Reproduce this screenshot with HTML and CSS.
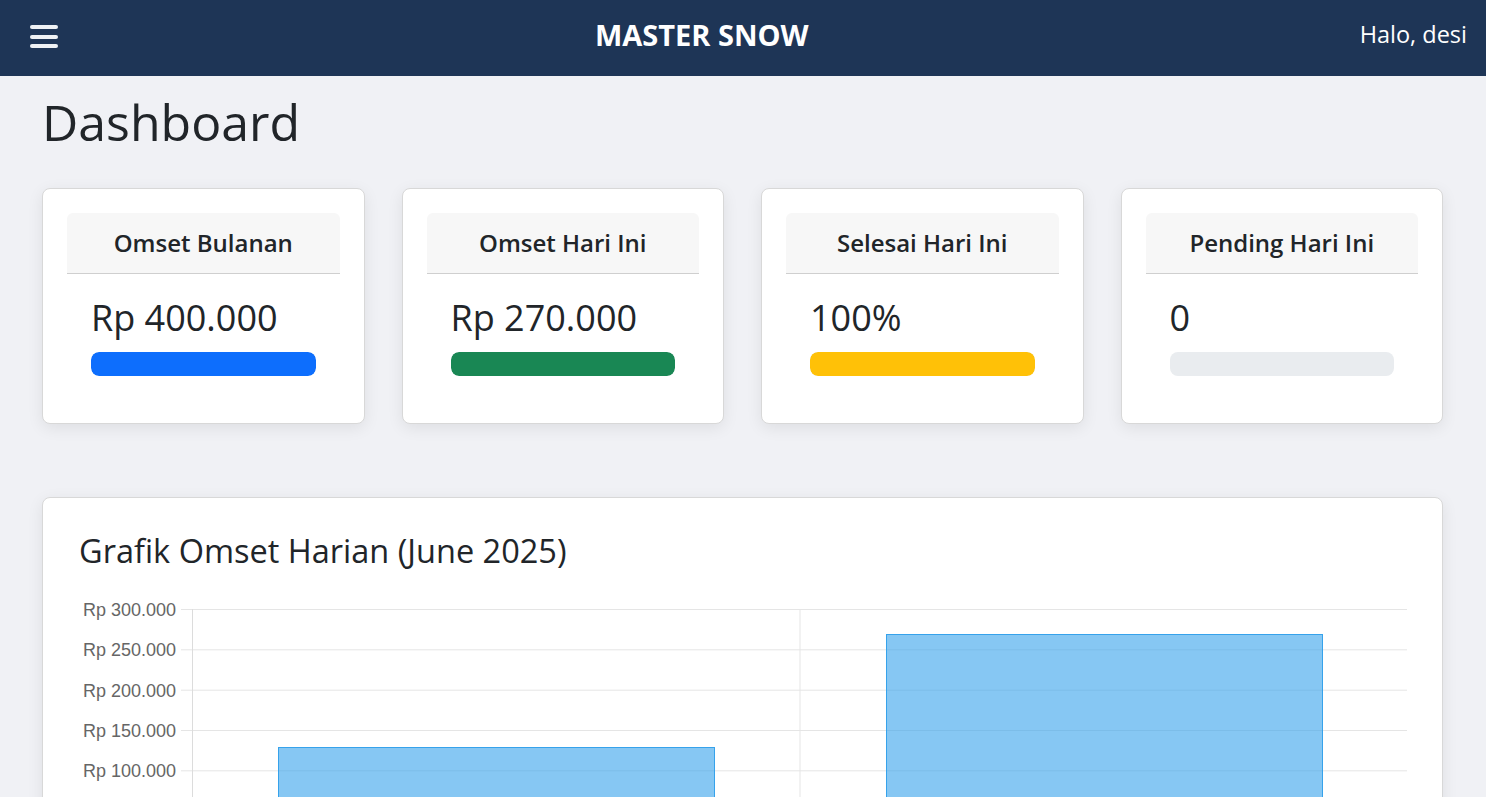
FILE: index.html
```html
<!DOCTYPE html>
<html lang="id">
<head>
<meta charset="utf-8">
<title>Dashboard - Master Snow</title>
<link rel="stylesheet" href="styles.css">
</head>
<body>
<header class="navbar">
  <button class="menu-btn" aria-label="Menu">
    <span class="bar"></span><span class="bar"></span><span class="bar"></span>
  </button>
  <div class="brand">MASTER SNOW</div>
  <div class="user">Halo, desi</div>
</header>
<main class="content">
  <h1 class="page-title">Dashboard</h1>
  <section class="stats">
    <div class="stat-card">
      <div class="stat-header">Omset Bulanan</div>
      <div class="stat-body">
        <div class="stat-value">Rp 400.000</div>
        <div class="progress"><div class="progress-fill fill-blue" style="width:100%"></div></div>
      </div>
    </div>
    <div class="stat-card">
      <div class="stat-header">Omset Hari Ini</div>
      <div class="stat-body">
        <div class="stat-value">Rp 270.000</div>
        <div class="progress"><div class="progress-fill fill-green" style="width:100%"></div></div>
      </div>
    </div>
    <div class="stat-card">
      <div class="stat-header">Selesai Hari Ini</div>
      <div class="stat-body">
        <div class="stat-value">100%</div>
        <div class="progress"><div class="progress-fill fill-yellow" style="width:100%"></div></div>
      </div>
    </div>
    <div class="stat-card">
      <div class="stat-header">Pending Hari Ini</div>
      <div class="stat-body">
        <div class="stat-value">0</div>
        <div class="progress"><div class="progress-fill fill-gray" style="width:0%"></div></div>
      </div>
    </div>
  </section>
  <section class="chart-card">
    <h2 class="chart-title">Grafik Omset Harian (June 2025)</h2>
    <svg class="chart" viewBox="0 0 1328 210" width="1328" height="210" xmlns="http://www.w3.org/2000/svg">
      <g class="grid" stroke="#e5e5e5" stroke-width="1">
        <line x1="102" y1="19.5" x2="1328" y2="19.5"/>
        <line x1="102" y1="59.8" x2="1328" y2="59.8"/>
        <line x1="102" y1="100.2" x2="1328" y2="100.2"/>
        <line x1="102" y1="140.5" x2="1328" y2="140.5"/>
        <line x1="102" y1="180.8" x2="1328" y2="180.8"/>
        <line x1="721" y1="19" x2="721" y2="210"/>
      </g>
      <line x1="113.5" y1="19" x2="113.5" y2="210" stroke="#dcdcdc" stroke-width="1"/>
      <g class="bars" fill="rgba(54,162,235,0.6)" stroke="rgb(54,162,235)" stroke-width="1">
        <rect x="199.5" y="157.5" width="436" height="60"/>
        <rect x="807.5" y="44.5" width="436" height="180"/>
      </g>
      <g class="ticks" fill="#666" font-family="'Liberation Sans', Arial, sans-serif" font-size="18" text-anchor="end">
        <text x="97" y="26">Rp 300.000</text>
        <text x="97" y="66.3">Rp 250.000</text>
        <text x="97" y="106.7">Rp 200.000</text>
        <text x="97" y="147">Rp 150.000</text>
        <text x="97" y="187.3">Rp 100.000</text>
      </g>
    </svg>
  </section>
</main>
</body>
</html>
```

FILE: styles.css
```css
* { box-sizing: border-box; }

body {
  margin: 0;
  background: #f0f1f5;
  font-family: "Open Sans", "Noto Sans", sans-serif;
  color: #212529;
  overflow: hidden;
}

.navbar {
  height: 76px;
  background: #1e3556;
  color: #ffffff;
  display: flex;
  align-items: center;
  justify-content: space-between;
  padding: 0 19px 0 30px;
}

.menu-btn {
  background: none;
  border: 0;
  padding: 0;
  width: 28px;
  display: flex;
  flex-direction: column;
  gap: 5.5px;
  cursor: pointer;
  margin-top: -3px;
}

.bar {
  display: block;
  height: 4px;
  width: 28px;
  background: #eef1f5;
  border-radius: 2px;
}

.brand {
  font-weight: 700;
  font-size: 29px;
  margin-top: -8px;
  margin-right: 14px;
}

.user {
  font-size: 23.5px;
  margin-top: -9px;
}

.content {
  padding: 0 43px 0 42px;
}

.page-title {
  margin: 16px 0 36px;
  font-size: 50px;
  font-weight: 400;
  line-height: 1.2;
}

.stats {
  display: grid;
  grid-template-columns: repeat(4, 1fr);
  gap: 37px;
}

.stat-card {
  background: #ffffff;
  border: 1px solid #d8d8d8;
  border-radius: 8px;
  box-shadow: 0 4px 16px rgba(0, 0, 0, 0.08);
  padding: 24px 24px 47px;
}

.stat-header {
  height: 61px;
  background: #f7f7f7;
  border-bottom: 1px solid #cfcfcf;
  border-radius: 6px 6px 0 0;
  display: flex;
  align-items: center;
  justify-content: center;
  font-size: 24px;
  font-weight: 600;
  padding-bottom: 1px;
}

.stat-body {
  padding: 0 24px;
}

.stat-value {
  margin-top: 22px;
  font-size: 36px;
  line-height: 1.2;
}

.progress {
  margin-top: 13px;
  height: 24px;
  background: #e9ecef;
  border-radius: 8px;
  overflow: hidden;
}

.progress-fill {
  height: 100%;
  border-radius: 8px;
}

.fill-blue { background: #0d6efd; }
.fill-green { background: #198754; }
.fill-yellow { background: #ffc107; }
.fill-gray { background: #e9ecef; }

.chart-card {
  margin-top: 73px;
  background: #ffffff;
  border: 1px solid #d8d8d8;
  border-radius: 8px;
  box-shadow: 0 4px 16px rgba(0, 0, 0, 0.08);
  padding: 33px 36px 40px;
}

.chart-title {
  margin: 0 0 19.5px;
  font-size: 32.5px;
  font-weight: 400;
  line-height: 1.2;
}

.chart {
  display: block;
}
```
